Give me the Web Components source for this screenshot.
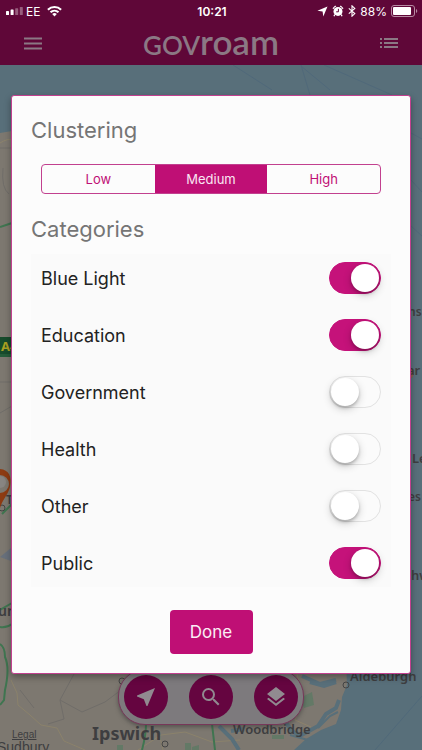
<!DOCTYPE html>
<html lang="en">
<head>
<meta charset="utf-8">
<meta name="viewport" content="width=device-width, initial-scale=1">
<title>Govroam</title>
<style>
  html, body { margin: 0; height: 100%; }
  body {
    font-family: Inter, "Liberation Sans", sans-serif;
    --brand: #bf0f75;
    --brand-dim: #5f0738;
    --line: #c2408f;
    --paper: #fcfcfc;
  }
</style>
</head>
<body>
<govroam-app></govroam-app>

<template id="status-bar">
  <style>
    :host { display: grid; grid-template-columns: 1fr auto 1fr; align-items: center; height: 22px; padding: 0 4px 0 6px; color: #fff; font-size: 12px; }
    .side { display: flex; align-items: center; gap: 5px; }
    .left { gap: 3px; }
    .right { justify-content: flex-end; gap: 4px; }
    .wifi { margin-left: 4px; }
    time { font-weight: 600; font-size: 12px; }
    svg { display: block; fill: #fff; }
  </style>
  <div class="side left">
    <svg width="17" height="8" viewBox="0 0 17 8" aria-label="Signal"><rect y="4" width="3" height="4" rx=".6"/><rect x="4.6" y="2.5" width="3" height="5.5" rx=".6"/><g opacity=".35"><rect x="9.2" y="1.2" width="3" height="6.8" rx=".6"/><rect x="13.8" width="3" height="8" rx=".6"/></g></svg>
    <span>EE</span>
    <svg class="wifi" width="15" height="12" viewBox="0 0 15 12" aria-label="Wi-Fi"><g fill="none" stroke="#fff" stroke-width="2.1"><path d="M.9 4.7a9.4 9.4 0 0 1 13.2 0"/><path d="M3.5 7.3a5.8 5.8 0 0 1 8 0"/></g><path d="M7.5 11.5 5.2 9.1a3.3 3.3 0 0 1 4.6 0z"/></svg>
  </div>
  <time>10:21</time>
  <div class="side right">
    <svg width="11" height="11" viewBox="0 0 11 11" aria-label="Location"><path d="M10.5.5 6.3 10.4 5.6 5.4.4 4.8z"/></svg>
    <svg width="12" height="12" viewBox="0 0 12 12" aria-label="Alarm"><path d="M.5 3.2 3.2.6l1.100 1A5.600 5.600 0 0 0 1.400 4.200zM11.500 3.200 8.800.6l-1.100 1a5.600 5.600 0 0 1 2.900 2.600z"/><circle cx="6" cy="6.400" r="4.500"/><path d="M2.800 9.500 2 11.200M9.200 9.500l.8 1.700" stroke="#fff" stroke-width="1.300"/><path d="M6.400 3.800V6.800H4.200" fill="none" stroke="#5f0738" stroke-width="1"/></svg>
    <svg width="8" height="12" viewBox="0 0 8 12" aria-label="Bluetooth"><path d="M.8 3.300 6.800 8.600 4 11.200V.8L6.800 3.400.8 8.700" fill="none" stroke="#fff" stroke-width="1.100"/></svg>
    <span>88%</span>
    <svg width="27" height="12" viewBox="0 0 27 12" aria-label="Battery"><rect x=".5" y=".5" width="23" height="11" rx="2.500" fill="none" stroke="#b78ba3"/><rect x="2" y="2" width="18" height="8" rx="1"/><path d="M25 4a2.200 2.200 0 0 1 0 4z" fill="#b78ba3"/></svg>
  </div>
</template>

<template id="app-header">
  <style>
    :host { display: block; background: var(--brand-dim); color: #8b7884; }
    nav { display: grid; grid-template-columns: 1fr auto 1fr; align-items: center; height: 39px; padding: 0 19px 4px; }
    button { border: 0; background: none; color: inherit; padding: 5px; justify-self: start; display: flex; }
    button:last-child { justify-self: end; }
    svg { display: block; }
    h1 { margin: 0; font-family: Lato, sans-serif; font-weight: 600; font-size: 26px; line-height: 38px; display: flex; align-items: baseline; }
    h1 span { font-size: 35px; }
  </style>
  <status-bar></status-bar>
  <nav>
    <button aria-label="Menu"><svg width="18" height="13" viewBox="0 0 18 13" fill="none" stroke="currentColor" stroke-width="2"><path d="M0 1.500h18M0 6.500h18M0 11.500h18"/></svg></button>
    <h1>GOV<span>roam</span></h1>
    <button aria-label="List"><svg width="18" height="12" viewBox="0 0 18 12" fill="none" stroke="currentColor" stroke-width="2"><path d="M0 2h2M4 2h14M0 6h2M4 6h14M0 10h2M4 10h14"/></svg></button>
  </nav>
</template>

<template id="map-view">
  <style>
    :host { display: block; overflow: hidden; background: #7d7870; }
    svg { display: block; width: 100%; height: 100%; font-family: "Noto Sans", sans-serif; }
  </style>
  <svg viewBox="0 65 422 685" preserveAspectRatio="xMidYMid slice" fill="none" role="img" aria-label="Map of Suffolk">
    <rect y="65" width="422" height="685" fill="#7d7870"/>
    <path d="M0 65H422V750H294L306 739 321 730 336 724 341 710 342 697 347 685 346 660 385 480 380 200 200 120 12 131 0 133z" fill="#586f7a"/>
    <path d="M233 65 272 90M301 65 310 95M301 66 330 90M324 65 392 95M411 133l11 6M411 180l11 12M411 226l11 10M375 750 422 696" stroke="#50697a" stroke-width="1"/>
    <g stroke="#8b826b" stroke-width="1">
      <path d="M0 143Q8 138 12 140M11 680 17 693 18 705 30 715 41 725 57 728 64 741 85 750M159 733l4 17M138 750l23-15 24-3 27 10 28-2"/>
    </g>
    <path d="M0 148H12M3 168Q1 188 9 194M0 382H12M0 413 12 406M74 674 60 700 64 719 48 724M60 700 82 712 105 702 121 690M20 690 34 708" stroke="#706d69" stroke-width="1"/>
    <path d="M297 674 303 700 295 720 311 727" stroke="#8d826b"/>
    <path d="M0 227 12 223M0 627Q7 628 12 624M0 644Q5 647 5 657 10 668 5 690L4 700 0 705M0 610 12 603M2 514 12 504M146 724Q146 735 142 750M212 724 215 750" stroke="#3f7550" stroke-width="2"/>
    <g fill="#637966"><path d="M117 745h6v5h-6zM185 743h6v7h-6zM192 747l7-2v5h-7zM300 698l12-6 2 13-10 3zM272 735h12v4h-12z"/></g>
    <path d="M0 557 11 548V561z" fill="#68707b"/>
    <path d="M219 726 232 739 239 750M231 731 244 729M282 717 292 731 300 736 318 726 326 714 336 708 339 700M302 676 320 684 336 680M310 682 324 686 336 682" stroke="#586f7a" stroke-width="4"/>
    <path d="M318 728 330 716 338 712M290 735 308 740" stroke="#586f7a" stroke-width="2"/>
    <g stroke="#444"><circle cx="165" cy="744" r="3"/><circle cx="346" cy="685" r="3"/><circle cx="122" cy="681" r="3"/><circle cx="2" cy="508" r="3"/></g>
    <rect x="-5" y="337" width="20" height="17" fill="#174b2c"/><rect x="-5" y="354" width="20" height="3" fill="#245b39"/>
    <text x="1" y="351" font-size="13" font-weight="700" fill="#aaa122">A4</text>
    <path d="M0 469C9 470 12 476 10 487 8 495 2 500 0 508V493A7 7 0 0 0 0 475z" fill="#8d3b12"/>
    <circle cx="0" cy="482" r="6" fill="#888582"/>
    <circle cx="408" cy="373" r="6" fill="#88604f"/>
    <g fill="#3e3e40" font-weight="600" font-size="13">
      <text x="408" y="316" font-size="12">ns</text><text x="407" y="375">ar</text><text x="412" y="463">Le</text><text x="408" y="501" font-size="12">es</text><text x="411" y="580">hw</text>
      <text x="-2" y="616" font-size="14">ur</text><text x="6" y="504" font-size="12">T</text>
      <text x="350" y="681" font-size="13">Aldeburgh</text>
      <text x="92" y="740" font-size="18" font-weight="700">Ipswich</text>
      <text x="233" y="734" font-size="13">Woodbridge</text>
      <g font-family="Liberation Sans, sans-serif" font-weight="400">
        <text x="-3" y="752" font-size="14">Sudbury</text>
        <text x="12" y="738" font-size="10" text-decoration="underline">Legal</text>
      </g>
    </g>
  </svg>
</template>

<template id="map-tools">
  <style>
    :host { display: flex; gap: 21px; padding: 5px; box-sizing: border-box; border: 1px solid #773759; border-radius: 27px; background: #7d7a7d; box-shadow: 0 2px 4px #3338; }
    button { width: 44px; height: 44px; border: 0; border-radius: 50%; padding: 0; background: #650540; color: #918a90; display: grid; place-items: center; }
    svg { display: block; fill: currentColor; }
  </style>
  <button aria-label="Locate me"><svg width="24" height="24" viewBox="0 0 24 24"><path d="M21 3 3 10.530v.98l6.840 2.650L12.480 21h.98z"/></svg></button>
  <button aria-label="Search"><svg width="24" height="24" viewBox="0 0 24 24"><path d="M15.500 14h-.79l-.28-.27A6.470 6.470 0 0 0 16 9.500 6.500 6.500 0 1 0 9.500 16c1.610 0 3.090-.59 4.230-1.570l.27.28v.79l5 4.990L20.490 19zm-6 0a4.500 4.500 0 1 1 0-9 4.500 4.500 0 0 1 0 9z"/></svg></button>
  <button aria-label="Layers"><svg width="24" height="24" viewBox="0 0 24 24"><path d="m11.990 18.540-7.370-5.730L3 14.070l9 7 9-7-1.630-1.270zM12 16l7.360-5.730L21 9l-9-7-9 7 1.630 1.270z"/></svg></button>
</template>

<template id="segment-control">
  <style>
    :host { display: block; }
    fieldset { margin: 0; padding: 0; min-width: 0; border: 1px solid var(--line); border-radius: 4px; display: grid; grid-template-columns: repeat(3, 1fr); overflow: hidden; }
    label { display: grid; place-items: center; height: 28px; font-size: 13px; color: var(--brand); }
    label:has(:checked) { background: var(--brand); color: #f9e6f2; }
    input { position: absolute; opacity: 0; margin: 0; }
  </style>
  <fieldset aria-label="Clustering">
    <label><input type="radio" name="c">Low</label>
    <label><input type="radio" name="c" checked>Medium</label>
    <label><input type="radio" name="c">High</label>
  </fieldset>
</template>

<template id="toggle-row">
  <style>
    :host { display: block; }
    label { display: flex; align-items: center; justify-content: space-between; height: 48px; padding: 0 10px; font-size: 18px; color: #222; }
    input { appearance: none; margin: 0; width: 52px; height: 32px; box-sizing: border-box; border-radius: 16px; border: 1px solid #e2e2e2; background: #fbfbfb; padding: 1px; display: flex; }
    input::before { content: ""; width: 28px; height: 28px; border-radius: 50%; background: #fff; box-shadow: 0 3px 8px #0003, 0 2px 3px #0003; }
    input:checked { background: #c5127a; border-color: #c5127a; justify-content: flex-end; }
  </style>
  <label><slot></slot><input type="checkbox" role="switch"></label>
</template>

<template id="filter-dialog">
  <style>
    :host { display: block; }
    section { display: flow-root; border: 1px solid var(--line); border-radius: 3px; background: var(--paper); padding: 19px; box-shadow: 0 3px 7px #0005; }
    h2 { margin: 0; font-size: 22px; line-height: 30px; font-weight: 400; color: #757575; }
    segment-control { margin: 19px 10px 20px; }
    .list { margin-top: 10px; background: #fafafa; display: grid; gap: 9px; }
    .done { display: block; margin: 23px auto 0; width: 83px; height: 44px; border: 0; border-radius: 4px; background: var(--brand); color: #fbedf5; font: 400 17px Inter, sans-serif; }
  </style>
  <section role="dialog" aria-label="Filters">
    <h2>Clustering</h2>
    <segment-control></segment-control>
    <h2>Categories</h2>
    <div class="list">
      <toggle-row checked>Blue Light</toggle-row>
      <toggle-row checked>Education</toggle-row>
      <toggle-row>Government</toggle-row>
      <toggle-row>Health</toggle-row>
      <toggle-row>Other</toggle-row>
      <toggle-row checked>Public</toggle-row>
    </div>
    <button class="done">Done</button>
  </section>
</template>

<template id="govroam-app">
  <style>
    :host { display: grid; grid-template-rows: auto 1fr; min-height: 100vh; }
    main { position: relative; padding: 30px 11px 76px; }
    map-view { position: absolute; inset: 0; }
    map-tools { position: absolute; bottom: 25px; left: 50%; transform: translateX(-50%); }
    filter-dialog { position: relative; }
  </style>
  <app-header></app-header>
  <main>
    <map-view></map-view>
    <map-tools></map-tools>
    <filter-dialog></filter-dialog>
  </main>
</template>

<script>
  class TemplateElement extends HTMLElement {
    constructor() {
      super();
      const template = document.getElementById(this.localName);
      this.attachShadow({ mode: "open" }).append(template.content.cloneNode(true));
    }
  }
  class ToggleRow extends TemplateElement {
    connectedCallback() {
      this.shadowRoot.querySelector("input").checked = this.hasAttribute("checked");
    }
  }
  customElements.define("status-bar", class extends TemplateElement {});
  customElements.define("app-header", class extends TemplateElement {});
  customElements.define("map-view", class extends TemplateElement {});
  customElements.define("map-tools", class extends TemplateElement {});
  customElements.define("segment-control", class extends TemplateElement {});
  customElements.define("toggle-row", ToggleRow);
  customElements.define("filter-dialog", class extends TemplateElement {});
  customElements.define("govroam-app", class extends TemplateElement {});
</script>
</body>
</html>
